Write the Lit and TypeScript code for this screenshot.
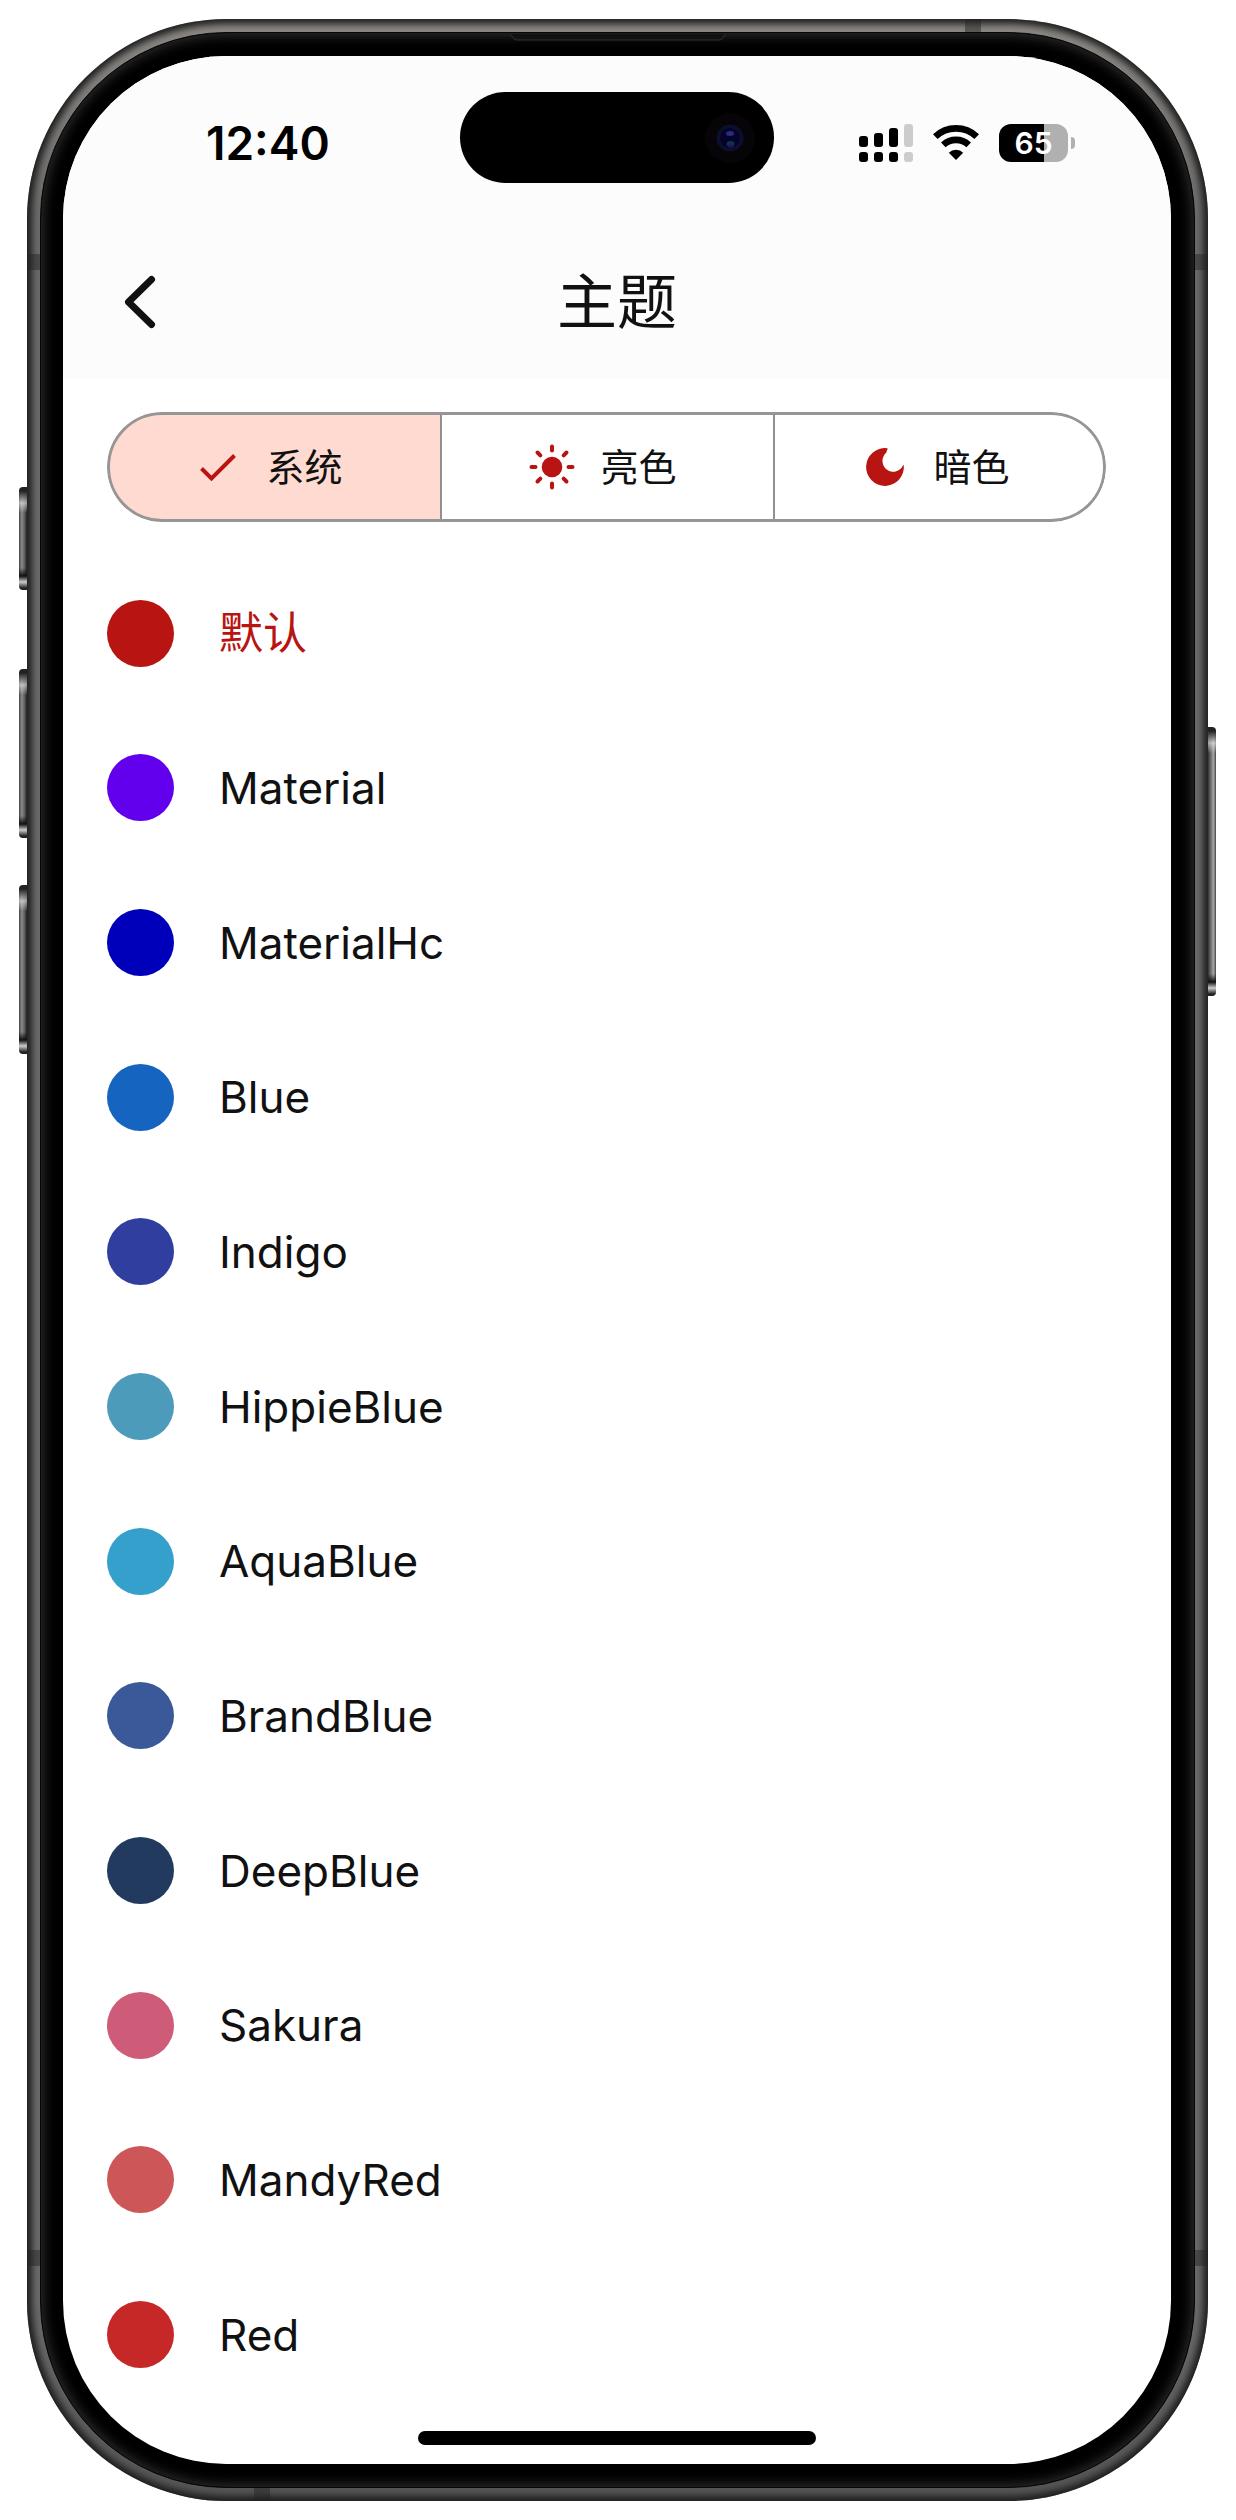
import { LitElement, css, html, svg } from "lit";
import { customElement, property, state } from "lit/decorators.js";
import { classMap } from "lit/directives/class-map.js";

interface Scheme {
  name: string;
  color: string;
}

const SCHEMES: Scheme[] = [
  { name: "默认", color: "#b81412" },
  { name: "Material", color: "#6200ee" },
  { name: "MaterialHc", color: "#0000ba" },
  { name: "Blue", color: "#1565c0" },
  { name: "Indigo", color: "#303f9f" },
  { name: "HippieBlue", color: "#4c9bba" },
  { name: "AquaBlue", color: "#35a0cb" },
  { name: "BrandBlue", color: "#3b5998" },
  { name: "DeepBlue", color: "#223a5e" },
  { name: "Sakura", color: "#ce5b78" },
  { name: "MandyRed", color: "#cd5758" },
  { name: "Red", color: "#c62828" },
];

const checkIcon = svg`<path d="M7.500 25.5 17.500 35.5 40.500 12.500" fill="none" stroke="currentColor" stroke-width="4" />`;

const sunIcon = svg`
  <circle cx="24" cy="24" r="10.3" fill="currentColor" />
  <g stroke="currentColor" stroke-width="4" stroke-linecap="round">
    ${[0, 45, 90, 135, 180, 225, 270, 315].map(
      (a) => svg`<path d="M24 3.5V7.5" transform="rotate(${a} 24 24)" />`
    )}
  </g>`;

const moonIcon = svg`<path fill="currentColor" d="M26 5.2A18.9 18.9 0 1 0 42.8 22.2C42.4 22 42.2 22.2 42 22.6A10.8 10.8 0 1 1 25.4 9.6C25.6 8 26.3 6.8 26.6 6C26.8 5.4 26.5 5.2 26 5.2Z" />`;

const MODES = [
  { id: "system", label: "系统", icon: checkIcon },
  { id: "light", label: "亮色", icon: sunIcon },
  { id: "dark", label: "暗色", icon: moonIcon },
];

@customElement("status-bar")
export class StatusBar extends LitElement {
  @property({ type: Number }) battery = 65;

  static styles = css`
    :host {
      display: flex;
      align-items: center;
      justify-content: space-between;
      box-sizing: border-box;
      height: 168px;
      padding: 6px 96px 0 143px;
      color: #000;
    }
    .time {
      font-size: 46px;
      line-height: 56px;
      font-weight: 600;
    }
    .icons {
      display: flex;
      align-items: center;
      gap: 20px;
    }
    .icon {
      display: block;
      height: 38px;
    }
    .battery {
      display: flex;
      align-items: center;
      gap: 3px;
    }
    .level {
      display: flex;
      align-items: center;
      justify-content: center;
      width: 69px;
      height: 38px;
      border-radius: 12px;
      color: #fff;
      font-size: 30px;
      line-height: 38px;
      font-weight: 600;
    }
    .nub {
      width: 4px;
      height: 12px;
      border-radius: 0 4px 4px 0;
      background: #b0b0b0;
    }
  `;

  render() {
    const fill = `background: linear-gradient(90deg, #000 ${this.battery}%, #b0b0b0 ${this.battery}%)`;
    return html`
      <span class="time">12:40</span>
      <div class="icons">
        <svg class="icon" width="54" viewBox="0 0 54 38" aria-hidden="true">
          <rect x="0" y="12" width="9" height="11" rx="3" />
          <rect x="15" y="9" width="9" height="14" rx="3" />
          <rect x="30" y="4" width="9" height="19" rx="3" />
          <rect x="45" y="0" width="9" height="23" rx="3" fill="#ccc" />
          <rect x="0" y="28" width="9" height="10" rx="3" />
          <rect x="15" y="28" width="9" height="10" rx="3" />
          <rect x="30" y="28" width="9" height="10" rx="3" />
          <rect x="45" y="28" width="9" height="10" rx="3" fill="#ccc" />
        </svg>
        <svg class="icon" width="46" viewBox="0 0 46 38" aria-hidden="true">
          <g fill="none" stroke="#000" stroke-width="6.6">
            <path d="M2.300 12.700A30 30 0 0 1 43.700 12.700" />
            <path d="M10.300 20.900A18.500 18.500 0 0 1 35.700 20.900" />
          </g>
          <path d="M23 36 15.800 28.800A10.200 10.200 0 0 1 30.200 28.800Z" />
        </svg>
        <div class="battery">
          <span class="level" style=${fill}>${this.battery}</span>
          <span class="nub"></span>
        </div>
      </div>
    `;
  }
}

@customElement("mode-switch")
export class ModeSwitch extends LitElement {
  @state() private mode = "system";

  static styles = css`
    :host {
      display: block;
    }
    .track {
      position: relative;
      display: grid;
      grid-template-columns: repeat(3, 1fr);
      height: 110px;
      border-radius: 55px;
      overflow: hidden;
    }
    .track::after {
      content: "";
      position: absolute;
      inset: 0;
      border: 3px solid #969696;
      border-radius: 55px;
      pointer-events: none;
    }
    .segment {
      display: flex;
      align-items: center;
      justify-content: center;
      gap: 24px;
      margin: 0;
      padding: 0 10px 0 0;
      border: 0;
      background: none;
      color: #111;
      font: inherit;
      font-size: 38px;
      line-height: 48px;
      cursor: pointer;
    }
    .segment + .segment {
      border-left: 2px solid #909090;
    }
    .active {
      background: #ffdad0;
    }
    .icon {
      width: 48px;
      height: 48px;
      color: #b81412;
    }
  `;

  render() {
    return html`
      <div class="track" role="group">
        ${MODES.map(
          (m) => html`
            <button
              type="button"
              class=${classMap({ segment: true, active: m.id === this.mode })}
              aria-pressed=${m.id === this.mode}
              @click=${() => (this.mode = m.id)}
            >
              <svg class="icon" viewBox="0 0 48 48" aria-hidden="true">
                ${m.id === this.mode ? checkIcon : m.icon}
              </svg>
              <span>${m.label}</span>
            </button>
          `
        )}
      </div>
    `;
  }
}

@customElement("scheme-list")
export class SchemeList extends LitElement {
  @state() private selected = SCHEMES[0].name;

  static styles = css`
    :host {
      display: flex;
    }
    .list {
      flex: 1;
      display: grid;
      grid-auto-rows: 1fr;
      margin: 0;
      padding: 0;
      list-style: none;
    }
    .item {
      display: grid;
      min-height: 120px;
    }
    .row {
      display: flex;
      align-items: center;
      gap: 45px;
      margin: 0;
      padding: 0 44px;
      border: 0;
      background: none;
      color: #111;
      font: inherit;
      font-size: 44px;
      line-height: 56px;
      text-align: left;
      cursor: pointer;
    }
    .current {
      color: #b81412;
    }
    .dot {
      flex: none;
      width: 67px;
      height: 67px;
      border-radius: 50%;
    }
  `;

  render() {
    return html`
      <ul class="list">
        ${SCHEMES.map(
          (s) => html`
            <li class="item">
              <button
                type="button"
                class=${classMap({ row: true, current: s.name === this.selected })}
                aria-pressed=${s.name === this.selected}
                @click=${() => (this.selected = s.name)}
              >
                <span class="dot" style="background: ${s.color}"></span>
                <span>${s.name}</span>
              </button>
            </li>
          `
        )}
      </ul>
    `;
  }
}

@customElement("app-root")
export class AppRoot extends LitElement {
  static styles = css`
    :host {
      display: flex;
      box-sizing: border-box;
      min-height: 100vh;
      padding: 19px 28px 19px 27px;
      background: #fff;
      font-family: Inter, "Noto Sans CJK SC", sans-serif;
    }
    .phone {
      position: relative;
      flex: 1;
      display: flex;
      padding: 13px;
      border-radius: 200px;
      background: linear-gradient(#8c8984, #6c6b6a 200px, #6c6b6a calc(100% - 200px), #545454);
      box-shadow: inset 0 0 7px 5px #1e1e1e;
    }
    .bezel {
      flex: 1;
      display: flex;
      padding: 23px 23px 23px 22px;
      border: 1px solid #060606;
      border-radius: 187px;
      background: #000;
      box-shadow: inset 0 0 12px 3px #2b2b2b;
    }
    .screen {
      position: relative;
      flex: 1;
      display: flex;
      flex-direction: column;
      border-radius: 163px;
      background: #fff;
      overflow: hidden;
    }
    .header {
      background: #fcfcfc;
    }
    .app-bar {
      display: grid;
      grid-template-columns: 1fr auto 1fr;
      align-items: center;
      height: 155px;
      padding: 0 44px;
    }
    .back {
      display: flex;
      justify-self: start;
      margin: 0;
      padding: 0;
      border: 0;
      background: none;
      cursor: pointer;
    }
    .title {
      margin: 0;
      color: #111;
      font-size: 60px;
      line-height: 72px;
      font-weight: 400;
    }
    .modes {
      margin: 33px 65px 34px 44px;
    }
    .schemes {
      flex: 1;
    }
    .home {
      display: flex;
      align-items: center;
      justify-content: center;
      height: 52px;
    }
    .handle {
      width: 36%;
      height: 14px;
      border-radius: 7px;
      background: #000;
    }
    .island {
      position: absolute;
      top: 36px;
      left: 50%;
      display: flex;
      align-items: center;
      justify-content: flex-end;
      box-sizing: border-box;
      width: 314px;
      height: 91px;
      margin-left: -157px;
      padding-right: 19px;
      border-radius: 46px;
      background: #000;
    }
    .key,
    .band,
    .speaker {
      position: absolute;
    }
    .key {
      left: -8px;
      width: 8px;
      border-radius: 4px 0 0 4px;
      background:
        linear-gradient(#222 4px, #eee9 16px, #0000 26px, #0000 calc(100% - 22px), #111 calc(100% - 14px), #ccc calc(100% - 8px), #222 calc(100% - 2px)),
        linear-gradient(90deg, #444, #8a8a8a 35%, #5c5c5c 70%, #222);
    }
    .key-action {
      top: 468px;
      height: 103px;
    }
    .key-up {
      top: 650px;
      height: 169px;
    }
    .key-down {
      top: 866px;
      height: 169px;
    }
    .key-side {
      top: 708px;
      left: auto;
      right: -8px;
      height: 269px;
      border-radius: 0 4px 4px 0;
      background:
        linear-gradient(#222 4px, #eee9 16px, #0000 26px, #0000 calc(100% - 22px), #111 calc(100% - 14px), #ccc calc(100% - 8px), #222 calc(100% - 2px)),
        linear-gradient(90deg, #333, #777 40%, #a8a4a2 70%, #444);
    }
    .band {
      width: 13px;
      height: 16px;
      background: #2227;
    }
    .band-tl {
      top: 235px;
      left: 0;
    }
    .band-tr {
      top: 235px;
      right: 0;
    }
    .band-bl {
      bottom: 235px;
      left: 0;
    }
    .band-br {
      bottom: 235px;
      right: 0;
    }
    .band-top {
      top: 0;
      right: 227px;
      width: 16px;
      height: 13px;
    }
    .band-bottom {
      bottom: 0;
      left: 227px;
      width: 16px;
      height: 13px;
    }
    .speaker {
      top: 15px;
      left: 50%;
      width: 216px;
      height: 7px;
      margin-left: -108px;
    }
  `;

  render() {
    return html`
      <div class="phone">
        <span class="key key-action"></span>
        <span class="key key-up"></span>
        <span class="key key-down"></span>
        <span class="key key-side"></span>
        <span class="band band-tl"></span>
        <span class="band band-tr"></span>
        <span class="band band-bl"></span>
        <span class="band band-br"></span>
        <span class="band band-top"></span>
        <span class="band band-bottom"></span>
        <div class="bezel">
          <main class="screen">
            <header class="header">
              <status-bar></status-bar>
              <div class="app-bar">
                <button class="back" type="button" aria-label="返回">
                  <svg width="64" height="64" viewBox="0 0 64 64" aria-hidden="true">
                    <path
                      d="M44.500 9.500 21.500 32 44.500 54.500"
                      fill="none"
                      stroke="#111"
                      stroke-width="7"
                      stroke-linecap="round"
                      stroke-linejoin="round"
                    />
                  </svg>
                </button>
                <h1 class="title">主题</h1>
              </div>
            </header>
            <mode-switch class="modes"></mode-switch>
            <scheme-list class="schemes"></scheme-list>
            <div class="home"><span class="handle"></span></div>
            <div class="island">
              <svg width="50" height="50" viewBox="0 0 50 50" aria-hidden="true">
                <circle cx="25" cy="25" r="25" fill="#060407" />
                <circle cx="25" cy="25" r="13.500" fill="#0d0d2c" />
                <circle cx="25" cy="25" r="10" fill="#04042a" />
                <ellipse cx="25" cy="20.500" rx="4" ry="2.500" fill="#2b2b7c" />
                <ellipse cx="25.500" cy="31" rx="4" ry="3" fill="#10304c" />
                <ellipse cx="26" cy="33" rx="3" ry="1.500" fill="#241854" />
              </svg>
            </div>
          </main>
        </div>
        <svg class="speaker" viewBox="0 0 216 7" aria-hidden="true">
          <path d="M0 0 4 5Q5 6 7 6H209Q211 6 212 5L216 0" fill="#111" stroke="#333" />
        </svg>
      </div>
    `;
  }
}
